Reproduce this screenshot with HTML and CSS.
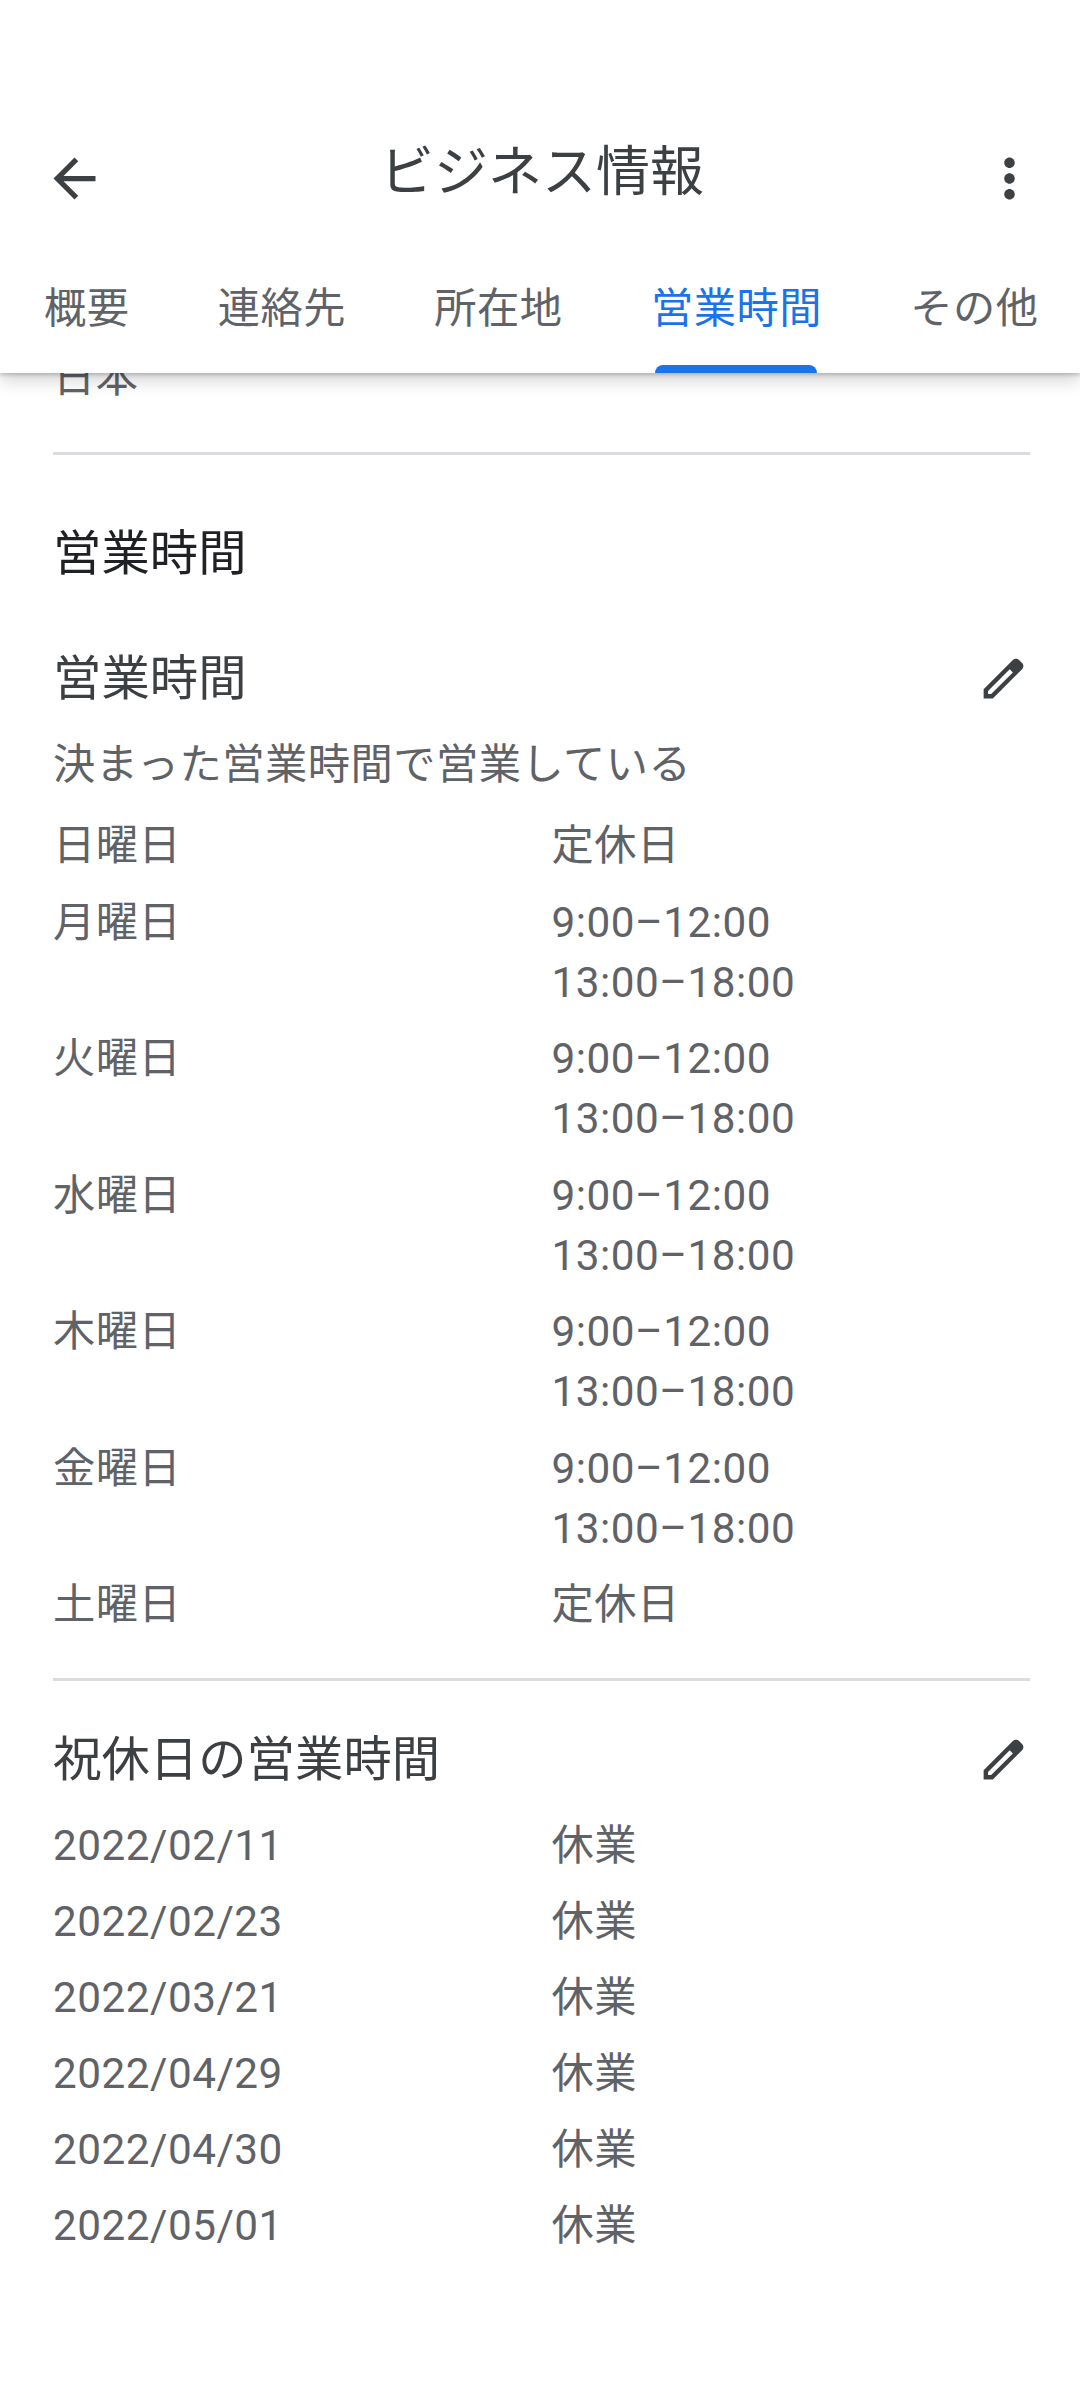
FILE: index.html
```html
<!DOCTYPE html>
<html lang="ja">
<head>
  <meta charset="UTF-8">
  <meta name="viewport" content="width=device-width, initial-scale=1.0">
  <title>ビジネス情報</title>
  <link rel="stylesheet" href="styles.css">
</head>
<body>
  <header class="header">
    <div class="topbar">
      <svg class="icon" viewBox="0 0 24 24"><path d="M20 11H7.83l5.59-5.59L12 4l-8 8 8 8 1.41-1.41L7.83 13H20v-2z"/></svg>
      <h1 class="title">ビジネス情報</h1>
      <svg class="icon" viewBox="0 0 24 24"><path d="M12 8c1.1 0 2-.9 2-2s-.9-2-2-2-2 .9-2 2 .9 2 2 2zm0 2c-1.1 0-2 .9-2 2s.9 2 2 2 2-.9 2-2-.9-2-2-2zm0 6c-1.1 0-2 .9-2 2s.9 2 2 2 2-.9 2-2-.9-2-2-2z"/></svg>
    </div>
    <nav class="tabs">
      <a class="tab">概要</a>
      <a class="tab">連絡先</a>
      <a class="tab">所在地</a>
      <a class="tab active">営業時間</a>
      <a class="tab">その他</a>
    </nav>
  </header>

  <main class="content">
    <p class="address">日本</p>

    <section class="section">
      <h2 class="section-title">営業時間</h2>
      <div class="item-head">
        <h3>営業時間</h3>
        <svg class="edit" viewBox="0 0 24 24"><path d="M20.41 4.94l-1.35-1.35c-.78-.78-2.05-.78-2.83 0L3 16.82V21h4.18L20.41 7.77c.79-.78.79-2.05 0-2.83zm-14 14.12L5 19v-1.36l9.82-9.82 1.41 1.41-9.82 9.83z"/></svg>
      </div>
      <p class="note">決まった営業時間で営業している</p>
      <div class="rows hours">
        <div class="row"><span>日曜日</span><span>定休日</span></div>
        <div class="row"><span>月曜日</span><span>9:00–12:00<br>13:00–18:00</span></div>
        <div class="row"><span>火曜日</span><span>9:00–12:00<br>13:00–18:00</span></div>
        <div class="row"><span>水曜日</span><span>9:00–12:00<br>13:00–18:00</span></div>
        <div class="row"><span>木曜日</span><span>9:00–12:00<br>13:00–18:00</span></div>
        <div class="row"><span>金曜日</span><span>9:00–12:00<br>13:00–18:00</span></div>
        <div class="row"><span>土曜日</span><span>定休日</span></div>
      </div>
    </section>

    <section class="section holiday">
      <div class="item-head">
        <h3>祝休日の営業時間</h3>
        <svg class="edit" viewBox="0 0 24 24"><path d="M20.41 4.94l-1.35-1.35c-.78-.78-2.05-.78-2.83 0L3 16.82V21h4.18L20.41 7.77c.79-.78.79-2.05 0-2.83zm-14 14.12L5 19v-1.36l9.82-9.82 1.41 1.41-9.82 9.83z"/></svg>
      </div>
      <div class="rows">
        <div class="row"><span>2022/02/11</span><span>休業</span></div>
        <div class="row"><span>2022/02/23</span><span>休業</span></div>
        <div class="row"><span>2022/03/21</span><span>休業</span></div>
        <div class="row"><span>2022/04/29</span><span>休業</span></div>
        <div class="row"><span>2022/04/30</span><span>休業</span></div>
        <div class="row"><span>2022/05/01</span><span>休業</span></div>
      </div>
    </section>
  </main>
</body>
</html>
```
FILE: styles.css
```css
* {
  box-sizing: border-box;
}
body {
  margin: 0;
  background-color: #fff;
  color: #5f6368;
  font-family: Roboto, "Noto Sans CJK JP", sans-serif;
  font-size: 42.26px;
  line-height: 60px;
  letter-spacing: 0.5px;
}
h1, h2, h3, p {
  margin: 0;
  font-weight: 400;
}
.header {
  position: relative;
  z-index: 1;
  height: 373px;
  padding-top: 131px;
  background-color: #fff;
  box-shadow: 0 2px 4px rgba(0, 0, 0, 0.2), 0 8px 16px rgba(0, 0, 0, 0.16);
}
.topbar {
  display: flex;
  justify-content: space-between;
  padding: 0 39px 0 43px;
  height: 124px;
}
.title {
  margin-top: 2px;
  font-size: 54px;
  line-height: 80px;
  letter-spacing: 0;
  color: #3c4043;
}
.icon {
  width: 63px;
  height: 63px;
  margin-top: 16px;
  fill: #3c4043;
}
.tabs {
  display: flex;
  gap: 88.3px;
  padding-left: 44px;
  height: 118px;
  white-space: nowrap;
}
.tab {
  display: flex;
  flex-direction: column;
  justify-content: space-between;
  padding-top: 24px;
}
.tab.active {
  color: #1a73e8;
}
.tab.active::after {
  content: "";
  height: 8px;
  margin: 0 5px 0 4px;
  border-radius: 8px 8px 0 0;
  background-color: #1a73e8;
}
.content {
  margin-top: -25px;
  padding: 0 50px 0 53px;
}
.section {
  margin-top: 44px;
  border-top: 3px solid #dadce0;
}
.section-title {
  margin: 64px 0 55px;
  font-size: 48.3px;
  line-height: 70px;
  letter-spacing: 0.1px;
  color: #202124;
}
.item-head {
  display: flex;
  justify-content: space-between;
  height: 70px;
}
.item-head h3 {
  font-size: 48.3px;
  line-height: 70px;
  letter-spacing: 0.1px;
  color: #3c4043;
}
.edit {
  width: 53px;
  height: 53px;
  margin-top: 8px;
  fill: #3c4043;
}
.note {
  margin-top: 21px;
}
.rows {
  display: flex;
  flex-direction: column;
  gap: 16px;
  margin-top: 21px;
}
.hours {
  gap: 16.5px;
}
.row {
  display: grid;
  grid-template-columns: 498.5px 1fr;
}
.holiday {
  margin-top: 43px;
}
.holiday .item-head {
  margin-top: 44px;
}
```
